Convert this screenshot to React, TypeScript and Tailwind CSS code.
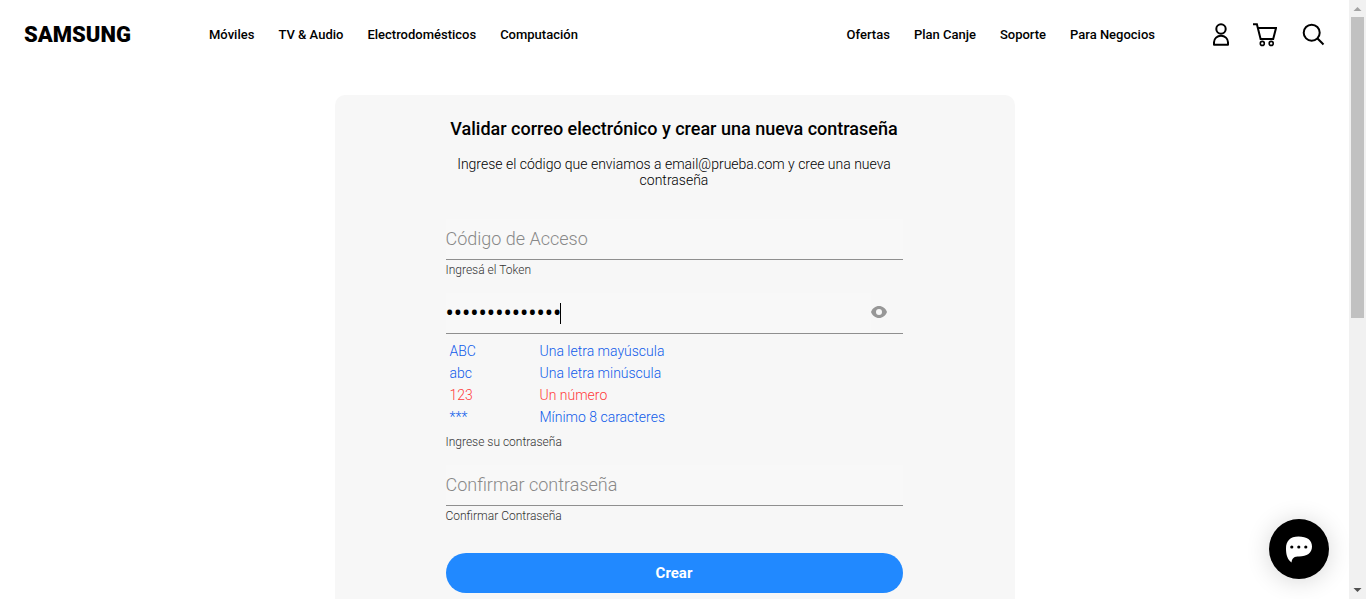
import { useState } from "react";

const products = ["Móviles", "TV & Audio", "Electrodomésticos", "Computación"];
const services = ["Ofertas", "Plan Canje", "Soporte", "Para Negocios"];

const rules = [
  { sample: "ABC", text: "Una letra mayúscula", ok: true },
  { sample: "abc", text: "Una letra minúscula", ok: true },
  { sample: "123", text: "Un número", ok: false },
  { sample: "***", text: "Mínimo 8 caracteres", ok: true },
];

function NavLinks({ items }: { items: string[] }) {
  return (
    <ul className="flex gap-6">
      {items.map((item) => (
        <li key={item}>
          <a href="#" className="whitespace-nowrap">{item}</a>
        </li>
      ))}
    </ul>
  );
}

function Header() {
  return (
    <header className="flex h-[69px] items-center pr-6 pl-6">
      <a href="#" className="w-[185px] shrink-0 text-[22px] leading-6 font-black text-black">
        SAMSUNG
      </a>
      <nav className="flex flex-1 justify-between text-[13px] leading-5 font-medium text-black">
        <NavLinks items={products} />
        <NavLinks items={services} />
      </nav>
      <div className="ml-14 flex items-center">
        <button type="button" aria-label="Mi cuenta">
          <svg width="20" height="24" viewBox="0 0 20 24" fill="none" stroke="#000" strokeWidth="2">
            <circle cx="10" cy="6" r="4.7" />
            <path d="M3 21.800v-2.500a7 6.600 0 0 1 14 0v2.500z" strokeLinejoin="round" />
          </svg>
        </button>
        <button type="button" aria-label="Carrito" className="ml-[22px]">
          <svg width="24" height="24" viewBox="0 0 24 24" fill="none" stroke="#000">
            <path d="M0 1.200h3.900L7.600 16h12.600L23 5H5" strokeWidth="2" />
            <circle cx="9.300" cy="20.400" r="2" strokeWidth="1.600" />
            <circle cx="18.200" cy="20.400" r="2" strokeWidth="1.600" />
          </svg>
        </button>
        <button type="button" aria-label="Buscar" className="ml-6">
          <svg width="24" height="24" viewBox="0 0 24 24" fill="none" stroke="#000" strokeWidth="2">
            <circle cx="10.700" cy="9.700" r="8" />
            <path d="M16.300 15.300 22.500 21.500" />
          </svg>
        </button>
      </div>
    </header>
  );
}

const lineClass = "border-b border-[#8f8f8f]";
const fieldClass =
  "h-10 w-full bg-[#f8f8f8] pb-0.5 text-lg font-light text-black outline-none placeholder:text-[#888]";
const hintClass = "block text-xs leading-5 font-light text-[#333]";

function ResetForm() {
  const [password, setPassword] = useState("ContraseñaAbcd");
  const [visible, setVisible] = useState(false);
  return (
    <form className="w-full max-w-[680px] rounded-[10px] bg-[#f7f7f7] pt-5 pr-28 pb-12 pl-[111px]">
      <h1 className="text-center text-lg leading-7 font-medium whitespace-nowrap text-black">
        Validar correo electrónico y crear una nueva contraseña
      </h1>
      <p className="mt-[13px] text-center text-sm leading-4 font-light text-black">
        Ingrese el código que enviamos a email@prueba.com y cree una nueva contraseña
      </p>

      <div className={"mt-[31px] " + lineClass}>
        <input id="token" placeholder="Código de Acceso" className={fieldClass} />
      </div>
      <label htmlFor="token" className={hintClass}>
        Ingresá el Token
      </label>

      <div className={"relative mt-[13px] flex items-center " + lineClass}>
        <input
          id="password"
          type={visible ? "text" : "password"}
          value={password}
          onChange={(e) => setPassword(e.target.value)}
          className="h-10 min-w-0 flex-1 bg-[#f8f8f8] pb-1 font-['Noto_Sans',sans-serif] text-[22px] text-black outline-none"
        />
        <span className="absolute top-2.5 left-[114px] h-[21px] w-px bg-black" />
        <button
          type="button"
          aria-label="Mostrar contraseña"
          className="mr-4 pb-0.5"
          onClick={() => setVisible(!visible)}
        >
          <svg className="block" width="16" height="16" viewBox="0 0 16 16">
            <path
              d="M8 2C4.400 2 1.300 4.500 0 8c1.300 3.500 4.400 6 8 6s6.700-2.500 8-6c-1.300-3.500-4.400-6-8-6z"
              fill="#979797"
            />
            <circle cx="8" cy="8" r="3" fill="#f7f7f7" />
          </svg>
        </button>
      </div>
      <ul className="mt-1.5 text-sm leading-[22px] font-light">
        {rules.map((rule) => (
          <li
            key={rule.sample}
            className={rule.ok ? "flex pl-1 text-[#0f5bea]" : "flex pl-1 text-[#ff3b3b]"}
          >
            <span className="w-[90px]">{rule.sample}</span>
            <span>{rule.text}</span>
          </li>
        ))}
      </ul>
      <label htmlFor="password" className={"mt-1 " + hintClass}>
        Ingrese su contraseña
      </label>

      <div className={"mt-[13px] " + lineClass}>
        <input
          id="confirm"
          type="password"
          placeholder="Confirmar contraseña"
          className={fieldClass}
        />
      </div>
      <label htmlFor="confirm" className={hintClass}>
        Confirmar Contraseña
      </label>

      <button
        type="button"
        className="mt-[27px] h-10 w-full rounded-full bg-[#2189ff] text-[15px] font-bold text-white"
      >
        Crear
      </button>
    </form>
  );
}

function PageScrollbar() {
  return (
    <div aria-hidden="true" className="flex w-[17px] shrink-0 flex-col items-center bg-[#f1f1f1]">
      <svg width="17" height="17" viewBox="0 0 17 17">
        <path d="M4.500 11h8l-4-4z" fill="#a3a3a3" />
      </svg>
      <div className="h-[301px] w-[13px] bg-[#c1c1c1]" />
      <svg className="mt-auto" width="17" height="17" viewBox="0 0 17 17">
        <path d="M4.500 6h8l-4 4z" fill="#505050" />
      </svg>
    </div>
  );
}

export default function App() {
  return (
    <div className="flex h-screen overflow-hidden bg-white font-[Roboto,sans-serif]">
      <div className="min-w-0 flex-1 overflow-hidden">
        <Header />
        <main className="flex justify-center pt-[26px]">
          <ResetForm />
        </main>
      </div>
      <button
        type="button"
        aria-label="Abrir chat"
        className="fixed right-[37px] bottom-5 flex size-[60px] items-center justify-center rounded-full bg-black shadow-[0_2px_24px_rgba(0,0,0,0.16)]"
      >
        <svg width="28" height="28" viewBox="0 0 28 28">
          <path
            d="M6.500 27.500C2.500 24.500 1 20 1 13.500 1 6 5 1.500 13.500 1.500S27 5 27 11.500 22 21.500 14 21.500c-4.500 0-7 1-7.500 6z"
            fill="#fff"
          />
          <circle cx="6.800" cy="12" r="1.600" />
          <circle cx="13.800" cy="12" r="1.600" />
          <circle cx="20.800" cy="12" r="1.600" />
        </svg>
      </button>
      <PageScrollbar />
    </div>
  );
}
